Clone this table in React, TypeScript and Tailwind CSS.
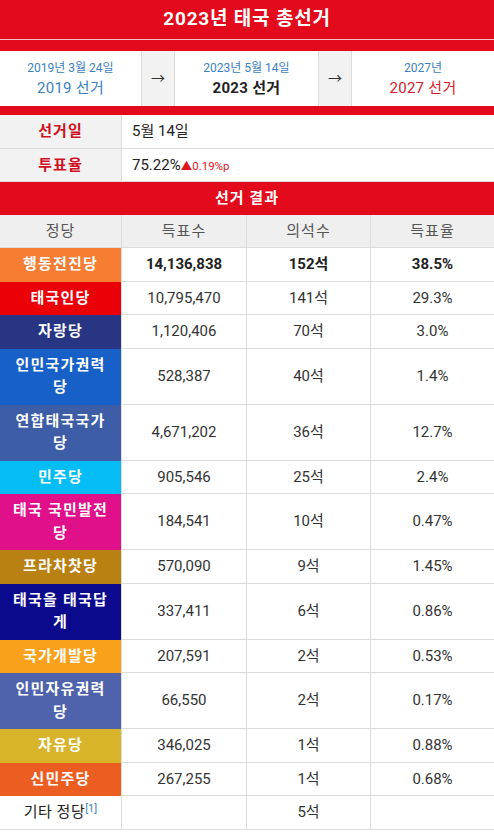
import React from 'react';

type Party = { name: string; bg: string; votes: string; seats: string; pct: string; bold?: boolean };

const parties: Party[] = [
  { name: '행동전진당', bg: 'bg-[#f77d33]', votes: '14,136,838', seats: '152석', pct: '38.5%', bold: true },
  { name: '태국인당', bg: 'bg-[#ec0008]', votes: '10,795,470', seats: '141석', pct: '29.3%' },
  { name: '자랑당', bg: 'bg-[#283583]', votes: '1,120,406', seats: '70석', pct: '3.0%' },
  { name: '인민국가권력당', bg: 'bg-[#1660c8]', votes: '528,387', seats: '40석', pct: '1.4%' },
  { name: '연합태국국가당', bg: 'bg-[#3d5da6]', votes: '4,671,202', seats: '36석', pct: '12.7%' },
  { name: '민주당', bg: 'bg-[#05bdf5]', votes: '905,546', seats: '25석', pct: '2.4%' },
  { name: '태국 국민발전당', bg: 'bg-[#e0108a]', votes: '184,541', seats: '10석', pct: '0.47%' },
  { name: '프라차찻당', bg: 'bg-[#b98012]', votes: '570,090', seats: '9석', pct: '1.45%' },
  { name: '태국을 태국답게', bg: 'bg-[#0b0a8c]', votes: '337,411', seats: '6석', pct: '0.86%' },
  { name: '국가개발당', bg: 'bg-[#f9a11b]', votes: '207,591', seats: '2석', pct: '0.53%' },
  { name: '인민자유권력당', bg: 'bg-[#4f63ad]', votes: '66,550', seats: '2석', pct: '0.17%' },
  { name: '자유당', bg: 'bg-[#d8b42a]', votes: '346,025', seats: '1석', pct: '0.88%' },
  { name: '신민주당', bg: 'bg-[#ec5d22]', votes: '267,255', seats: '1석', pct: '0.68%' },
];

export default function App() {
  return (
    <div
      className="w-[494px] bg-white text-[15px] leading-[1.5] text-[#333]"
      style={{ fontFamily: 'Roboto, "Noto Sans CJK KR", sans-serif' }}
    >
      {/* Title */}
      <div className="flex h-[39px] items-center justify-center bg-[#e20a1b] text-[19px] font-bold tracking-[0.8px] text-white">
        2023년 태국 총선거
      </div>
      <div className="h-px bg-[#f2c6c9]" />
      <div className="bg-[#e20a1b] pt-[11px] pb-[9px]">
        <div className="flex h-[55px] bg-white">
          <div className="flex w-[141px] flex-col items-center justify-center">
            <div className="text-[12px] leading-[18px] text-[#3b7fc4]">2019년 3월 24일</div>
            <div className="text-[15px] leading-[22px] tracking-[0.3px] text-[#3b7fc4]">2019 선거</div>
          </div>
          <div className="flex w-[34px] items-center justify-center border-x border-[#dcdcdc] bg-[#f2f2f2] text-[14px] text-[#333]">
            →
          </div>
          <div className="flex w-[143px] flex-col items-center justify-center">
            <div className="text-[12px] leading-[18px] text-[#3b7fc4]">2023년 5월 14일</div>
            <div className="text-[15px] font-bold leading-[22px] tracking-[0.3px] text-[#222]">2023 선거</div>
          </div>
          <div className="flex w-[34px] items-center justify-center border-x border-[#dcdcdc] bg-[#f2f2f2] text-[14px] text-[#333]">
            →
          </div>
          <div className="flex flex-1 flex-col items-center justify-center">
            <div className="text-[12px] leading-[18px] text-[#3b7fc4]">2027년</div>
            <div className="text-[15px] leading-[22px] tracking-[0.3px] text-[#d42029]">2027 선거</div>
          </div>
        </div>
      </div>

      {/* Info rows */}
      <div className="flex border-b border-[#dcdcdc]">
        <div className="w-[122px] border-r border-[#dcdcdc] bg-[#f2f2f2] py-[5px] text-center font-bold tracking-[1px] text-[#d0101f]">
          선거일
        </div>
        <div className="flex-1 py-[5px] pl-[10px] text-[#222]">5월 14일</div>
      </div>
      <div className="flex border-b border-[#dcdcdc]">
        <div className="w-[122px] border-r border-[#dcdcdc] bg-[#f2f2f2] py-[5px] text-center font-bold tracking-[1px] text-[#d0101f]">
          투표율
        </div>
        <div className="flex-1 py-[5px] pl-[10px] text-[#222]">
          75.22%<span className="text-[11.5px] text-[#e0141e]">▲0.19%p</span>
        </div>
      </div>

      {/* Results header */}
      <div className="bg-[#e20a1b] py-[5px] text-center font-bold tracking-[1px] text-white">선거 결과</div>

      <div className="flex border-b border-[#dcdcdc] bg-[#efefef] tracking-[1px] text-[#555]">
        <div className="w-[122px] border-r border-[#dcdcdc] py-[5px] text-center">정당</div>
        <div className="w-[125px] border-r border-[#dcdcdc] py-[5px] text-center">득표수</div>
        <div className="w-[124px] border-r border-[#dcdcdc] py-[5px] text-center">의석수</div>
        <div className="flex-1 py-[5px] text-center">득표율</div>
      </div>

      {parties.map((p) => (
        <div key={p.name} className={`flex ${p.bold ? 'font-bold text-[#222]' : ''}`}>
          <div
            className={`flex w-[122px] items-center justify-center border-r border-[#dcdcdc] px-[11px] pt-[5px] pb-[6px] text-center font-bold tracking-[1.2px] text-white ${p.bg}`}
          >
            {p.name}
          </div>
          <div className="flex w-[125px] items-center justify-center border-r border-b border-[#dcdcdc] py-[5px]">
            {p.votes}
          </div>
          <div className="flex w-[124px] items-center justify-center border-r border-b border-[#dcdcdc] py-[5px]">
            {p.seats}
          </div>
          <div className="flex flex-1 items-center justify-center border-b border-[#dcdcdc] py-[5px]">
            {p.pct}
          </div>
        </div>
      ))}

      <div className="flex border-b border-[#dcdcdc]">
        <div className="w-[122px] border-r border-[#dcdcdc] py-[5px] text-center tracking-[0.5px] text-[#222]">
          기타 정당<sup className="text-[11px] tracking-normal text-[#3b7fc4]">[1]</sup>
        </div>
        <div className="w-[125px] border-r border-[#dcdcdc] py-[5px]" />
        <div className="w-[124px] border-r border-[#dcdcdc] py-[5px] text-center">5석</div>
        <div className="flex-1 py-[5px]" />
      </div>
    </div>
  );
}
